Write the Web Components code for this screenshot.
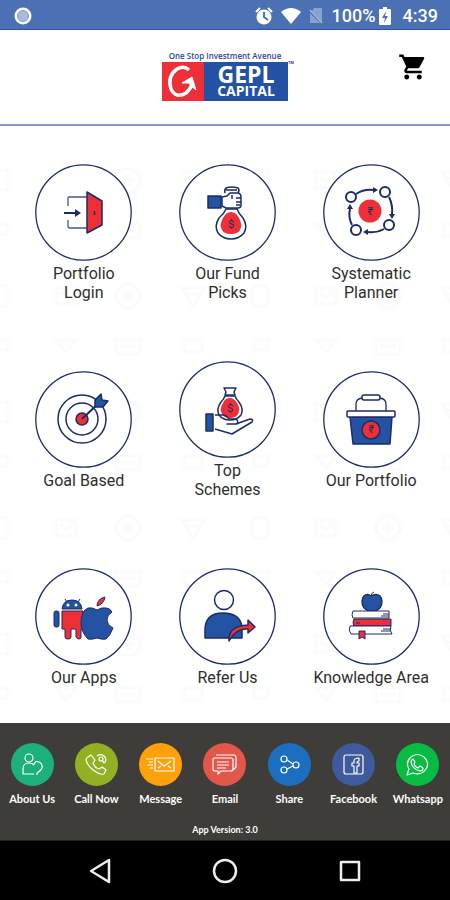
<!DOCTYPE html>
<html lang="en">
<head>
<meta charset="utf-8">
<meta name="viewport" content="width=device-width, initial-scale=1">
<title>GEPL Capital</title>
<style>
  body {
    margin: 0;
    background: #fff;
    font-family: Roboto, "Liberation Sans", sans-serif;
  }
</style>
</head>
<body>
<app-screen>
  <status-bar slot="status" battery="100%" time="4:39"></status-bar>
  <app-header slot="header"></app-header>

  <menu-tile icon="login">Portfolio<br>Login</menu-tile>
  <menu-tile icon="fund">Our Fund<br>Picks</menu-tile>
  <menu-tile icon="planner">Systematic<br>Planner</menu-tile>
  <menu-tile icon="goal">Goal Based</menu-tile>
  <menu-tile icon="schemes">Top<br>Schemes</menu-tile>
  <menu-tile icon="basket">Our Portfolio</menu-tile>
  <menu-tile icon="apps">Our Apps</menu-tile>
  <menu-tile icon="refer">Refer Us</menu-tile>
  <menu-tile icon="books">Knowledge Area</menu-tile>

  <contact-bar slot="footer">
    <contact-link icon="about" color="#1bb07c">About Us</contact-link>
    <contact-link icon="call" color="#93b023">Call Now</contact-link>
    <contact-link icon="message" color="#ffa10a">Message</contact-link>
    <contact-link icon="email" color="#e2574a">Email</contact-link>
    <contact-link icon="share" color="#1c6fc0">Share</contact-link>
    <contact-link icon="facebook" color="#3d5a9c">Facebook</contact-link>
    <contact-link icon="whatsapp" color="#07bb43">Whatsapp</contact-link>
    <span slot="version">App Version: 3.0</span>
  </contact-bar>
  <nav-bar slot="nav"></nav-bar>
</app-screen>

<script>
// menu icons, drawn on a 97 x 97 canvas
const TILE_ICONS = {
  login: `
    <path d="M33 42v-8q0-1 1-1h18M33 56v6q0 2 2 2h17" stroke-width="1.3" stroke="#4a5685"/>
    <path d="M29 49h13" stroke-width="2"/><path class="navy" d="M40 45l6 4-6 4z"/>
    <path class="red" d="M52 28l15 9v24l-15 8z"/>
    <path d="M59.5 47v4"/>`,
  fund: `
    <path d="M46 29q-1-3 1-5 5-2 12 0 2 2 0 5M47 26h11"/>
    <path class="blue" d="M29 32h13v12H29z"/>
    <path class="white" d="M43 33l5-1 3-3h7q4 0 4 4v8q0 3-3 3H47l-4-2zM57 34h5M57 38h5M57 41h4M53 31v4"/>
    <path class="white" d="M47 45h11q2 5 6 9 5 8 1 15-5 6-13 6t-13-6q-4-7 1-15 5-4 7-9z"/>
    <path class="fill-red" d="M52 48q5 0 8 6 4 7 1 12-2 4-9 4t-9-4q-3-5 1-12 3-6 8-6z"/>
    <text x="52" y="64">$</text>`,
  planner: `
    <circle cx="28" cy="33" r="5" stroke-width="2"/><circle cx="62" cy="28" r="5" stroke-width="2"/>
    <circle cx="66" cy="61" r="5" stroke-width="2"/><circle cx="33" cy="66" r="5" stroke-width="2"/>
    <path d="M33 30q8-5 17-4M66 33q4 8 3 17M61 65q-7 4-16 3M29 61q-4-8-2-16" stroke-width="2"/>
    <path class="navy" d="M50 23l5 3-5 3zM66 50l3 5 3-5zM45 65l-5 3 5 3zM24 45l3-5 3 5z"/>
    <circle class="fill-red" cx="47" cy="47" r="11.5"/>
    <text x="47" y="51">₹</text>`,
  goal: `
    <circle cx="47" cy="48" r="24"/><circle cx="47" cy="48" r="16"/>
    <circle class="red" cx="47" cy="48" r="6"/>
    <path d="M47 48l19-18" stroke-width="2"/>
    <path class="blue" d="M60 36v-7l6-6 1 6 6 1-5 6z"/>`,
  schemes: `
    <path d="M45 27h12l-2 4 1 3H46l1-3z"/>
    <path class="white" d="M46 35h10q1 3 4 6 5 7 2 13-4 5-11 5t-11-5q-3-6 2-13 3-3 4-6z"/>
    <path class="fill-red" d="M51 37q4 0 7 5 4 6 1 11-2 4-8 4t-8-4q-3-5 1-11 2-5 7-5z"/>
    <text x="51" y="51">$</text>
    <path class="blue" d="M27 53h7v17h-7z"/>
    <path d="M36 54h8q3 0 6 4h6q4 1 2 5H48h9l14-5q4 0 2 3L53 73l-17-5"/>`,
  basket: `
    <path d="M33 40v-7q0-5 6-6M63 40v-7q0-5-6-6" stroke-width="1.3"/>
    <rect x="39" y="24" width="18" height="5" rx="2"/>
    <path class="blue" d="M27 46h42l-2 27H30z"/>
    <rect class="white" x="24" y="40" width="48" height="6" rx="1"/>
    <circle class="red" cx="48" cy="59" r="9"/>
    <text x="48" y="62">₹</text>`,
  apps: `
    <path d="M30 31l2 3M45 31l-2 3" stroke-width="1"/>
    <path class="blue" d="M27 41q1-9 10-9t10 9z" stroke-width="1"/>
    <circle class="dot" cx="33" cy="37" r="1.5"/><circle class="dot" cx="41" cy="37" r="1.5"/>
    <rect class="blue" x="19" y="43" width="5" height="16" rx="2" stroke-width="1"/>
    <path class="red" stroke-width="1" d="M27 43h21v18h-2v8q0 2-2 2t-3-2v-8h-5v8q0 2-3 2t-3-2v-8h-3z"/>
    <path class="blue" stroke-width="1" d="M62 42q5-3 9-2 4 0 6 4-5 3-5 8t6 8q-3 8-7 11-3 1-9-1-6 2-9 1-7-7-7-16 0-12 7-15 4-1 9 2z"/>
    <path class="red" stroke-width="1" d="M62 38q0-7 8-9-1 7-8 9z"/>`,
  refer: `
    <circle cx="45" cy="32" r="9.5"/>
    <path class="blue" d="M26 70v-8q0-17 18-17t19 15v10z"/>
    <path class="red" d="M50 73q-1-15 19-16v-5l7 7-7 6v-4q-12-1-19 12z"/>`,
  books: `
    <path class="blue" d="M48 28q5-3 9 0 4 5 0 12l-4 3h-8l-4-3q-4-7 0-12 3-3 7 0z"/>
    <path d="M48 28q0-3 3-4" stroke-width="1"/>
    <g stroke-width="1"><path class="white" d="M30 43h36v7H30q-2-3 0-7zM60 46h6M58 48h8"/>
    <path class="red" d="M31 51h37v7H31q-2-3 0-7zM33 55h4"/>
    <path class="white" d="M27 58h41q-2 4 1 8H28q-3-4-1-8zM60 61h8M58 63h9"/>
    <path class="red" d="M36 63h6v8l-3-2-3 2z"/></g>`
};

// contact icons, drawn on a 43 x 43 canvas
const CONTACT_ICONS = {
  about: `<circle cx="18" cy="15" r="4"/>
    <path d="M23 31H12v-5q0-6 6-6 3 0 5 2M23 22q1-5 5-3 4 2 3 6-1 3-5 5v2"/>`,
  call: `<path d="M13 14l3-2 4 5-2 3q2 5 6 6l3-2 4 3-2 4q-4 1-8-2-8-5-10-12 0-2 2-3z"/>
    <circle cx="26" cy="16" r="2"/><path d="M22 13q4-3 8 1 2 4-1 6l-2-3"/>`,
  message: `<rect x="16" y="15" width="19" height="13"/>
    <path d="M19 18l6 5 7-5M19 25l3-2M32 25l-3-2M7 16h7M10 19h4M8 22h6M11 25h3"/>`,
  email: `<path d="M11 15h17q2 0 2 2v9q0 2-2 2H18l-3 3v-3h-3q-2 0-2-2v-9q0-2 2-2zM13 12h18q2 0 2 3v9l-3 3M14 19h12M14 22h12M14 25h9"/>`,
  share: `<circle cx="16" cy="16" r="3"/><circle cx="28" cy="22" r="3"/><circle cx="16" cy="27" r="3"/>
    <path d="M19 17l6 4M19 26l6-3"/>`,
  facebook: `<rect x="12" y="12" width="19" height="19" rx="2"/>
    <path d="M22 30v-7h-2v-3h2v-2q0-3 5-3v3q-2 0-2 2h2v3h-2v7z"/>`,
  whatsapp: `<path d="M11 32l2-6q-4-7 2-12 6-5 13 0 6 6 2 12-5 7-13 4z"/>
    <path d="M17 16l2 3-1 2q1 3 4 4l2-2 3 2q0 3-3 3-8-2-9-9 0-2 2-3z"/>`
};

class AppScreen extends HTMLElement {
  constructor() {
    super();
    this.attachShadow({ mode: 'open' }).innerHTML = `
      <style>
        :host {
          display: flex;
          flex-direction: column;
          min-height: 100vh;
        }
        main {
          position: relative;
          flex: 1;
          display: grid;
          overflow: hidden;
        }
        .backdrop {
          position: absolute;
          width: 100%;
          height: 100%;
          fill: none;
          stroke: #fbfbfb;
          stroke-width: 3;
        }
        .grid {
          position: relative;
          display: grid;
          grid-template-columns: repeat(3, 1fr);
          grid-auto-rows: 1fr;
          align-items: center;
          row-gap: 59px;
          padding: 38px 7px 27px 12px;
        }
      </style>
      <slot name="status"></slot>
      <slot name="header"></slot>
      <main>
        <svg class="backdrop" aria-hidden="true">
          <defs>
            <pattern id="doodles" width="260" height="116" patternUnits="userSpaceOnUse">
              <path d="M-8 44h16v20H-8zM252 44h16v20h-16zM56 46h20v16H56zM60 50l6 6 8-8"/>
              <circle cx="128" cy="54" r="12"/><path d="M122 54h12M128 48v12"/>
              <path d="M182 46h22l-11 19zM186 52h14"/>
              <path d="M-6 98h14v10H-6zM254 98h14v10h-14zM56 98l10 12 10-12zM116 98h24v14h-24zM120 104h16M184 98h18v12h-18z"/>
            </pattern>
          </defs>
          <rect width="100%" height="100%" fill="url(#doodles)" stroke="none"/>
        </svg>
        <div class="grid"><slot></slot></div>
      </main>
      <slot name="footer"></slot>
      <slot name="nav"></slot>
    `;
  }
}

class StatusBar extends HTMLElement {
  constructor() {
    super();
    this.attachShadow({ mode: 'open' }).innerHTML = `
      <style>
        :host {
          display: flex;
          align-items: center;
          box-sizing: border-box;
          height: 30px;
          padding: 2px 12px 0 14px;
          border-bottom: 1px solid #2c53a3;
          background: #4b70b4;
          color: #fff;
          font-size: 18px;
          font-weight: 500;
          line-height: 20px;
        }
        svg { display: block; fill: #fff; }
        .dot { margin-right: auto; }
        .icons { display: flex; align-items: center; gap: 8px; margin-right: 9px; }
        .battery { margin: 0 12px 0 3px; }
      </style>
      <svg class="dot" width="18" height="18" viewBox="0 0 18 18"><circle cx="9" cy="9" r="8.5"/><circle cx="9" cy="9" r="5.5" fill="#a9bbdc" stroke="#7f99ca"/></svg>
      <div class="icons">
        <svg width="18" height="18" viewBox="0 0 18 18"><circle cx="9" cy="10" r="7.5"/><path d="M1 5l4-4M17 5l-4-4" stroke="#fff" stroke-width="2"/><path d="M9 5v5l4 3" fill="none" stroke="#4b70b4" stroke-width="2"/></svg>
        <svg width="20" height="18" viewBox="0 0 20 18"><path d="M0 5q10-8 20 0L10 17z"/></svg>
        <svg width="14" height="18" viewBox="0 0 14 18"><path d="M5 1h8v14L3 4z" opacity=".35"/><path d="M1 6l10 10H1z" opacity=".35"/><path d="M1 3l12 13" stroke="#a9bbdc" stroke-width="1.5"/></svg>
      </div>
      <span id="level"></span>
      <svg class="battery" width="12" height="18" viewBox="0 0 12 18"><path d="M4 0h4v2h3q1 0 1 1v14q0 1-1 1H1q-1 0-1-1V3q0-1 1-1h3z"/><path d="M7 4l-4 7h3l-1 5 4-7H6z" fill="#4b70b4"/></svg>
      <span id="time"></span>
    `;
  }

  connectedCallback() {
    this.shadowRoot.getElementById('level').textContent = this.getAttribute('battery');
    this.shadowRoot.getElementById('time').textContent = this.getAttribute('time');
  }
}

class AppHeader extends HTMLElement {
  constructor() {
    super();
    this.attachShadow({ mode: 'open' }).innerHTML = `
      <style>
        :host { display: block; border-bottom: 2px solid #8598c8; }
        header {
          display: grid;
          grid-template-columns: 1fr auto 1fr;
          align-items: start;
          padding: 20px 22px 23px;
        }
        .logo {
          grid-column: 2;
          width: 126px;
          font-family: "Open Sans", "Noto Sans", sans-serif;
          font-weight: 700;
          text-align: center;
        }
        .tagline {
          color: #33458f;
          font-size: 8px;
          font-weight: 600;
          line-height: 12px;
          white-space: nowrap;
        }
        .brand { position: relative; display: flex; height: 39px; color: #fff; }
        .mark { width: 42px; background: #ed2f38; }
        .name { flex: 1; background: #2352a5; }
        .gepl { font-size: 23px; line-height: 24px; }
        .capital { font-size: 14px; line-height: 10px; }
        .tm { position: absolute; left: 100%; top: -2px; color: #33458f; font-size: 4px; line-height: 6px; }
        button {
          justify-self: end;
          padding: 0;
          border: 0;
          background: none;
        }
        svg { display: block; }
      </style>
      <header>
        <div class="logo">
          <div class="tagline">One Stop Investment Avenue</div>
          <div class="brand">
            <svg class="mark" width="42" height="39" viewBox="0 0 42 39">
              <path d="M27 8Q22 3 15 7 5 14 9 27q5 10 15 4 4-3 6-9" fill="none" stroke="#fff" stroke-width="3.5"/>
              <path d="M20 21l10-6 4 13-5-4-2-3z" fill="#fff" stroke="#fff"/>
            </svg>
            <div class="name"><div class="gepl">GEPL</div><div class="capital">CAPITAL</div></div>
            <span class="tm">TM</span>
          </div>
        </div>
        <button aria-label="Cart">
          <svg width="30" height="34" viewBox="0 0 24 24"><path d="M7 18c-1.1 0-1.99.9-1.99 2S5.9 22 7 22s2-.9 2-2-.9-2-2-2zM1 2v2h2l3.6 7.59-1.35 2.45c-.16.28-.25.61-.25.96 0 1.1.9 2 2 2h12v-2H7.42c-.14 0-.25-.11-.25-.25l.03-.12.9-1.63h7.45c.75 0 1.41-.41 1.75-1.03l3.58-6.49A1 1 0 0 0 20 4H5.21l-.94-2H1zm16 16c-1.1 0-1.99.9-1.99 2s.89 2 1.99 2 2-.9 2-2-.9-2-2-2z"/></svg>
        </button>
      </header>
    `;
  }
}

class MenuTile extends HTMLElement {
  constructor() {
    super();
    this.attachShadow({ mode: 'open' }).innerHTML = `
      <style>
        :host { display: block; }
        a {
          display: flex;
          flex-direction: column;
          align-items: center;
          gap: 3px;
          color: #2e2e2e;
          font-size: 16px;
          line-height: 19px;
          text-align: center;
          text-decoration: none;
          white-space: nowrap;
        }
        svg {
          display: block;
          width: 97px;
          height: 97px;
          fill: none;
          stroke: #1c2c66;
          stroke-width: 1.5;
          stroke-linejoin: round;
        }
        .ring { fill: #fff; stroke-width: 1.3; }
        .red { fill: #ee2f36; }
        .fill-red { fill: #ee2f36; stroke: none; }
        .blue { fill: #2553a4; }
        .navy { fill: #1c2c66; stroke: none; }
        .white { fill: #fff; }
        .dot { fill: #fff; stroke: none; }
        text {
          fill: #1c2c66;
          stroke: none;
          font-size: 11px;
          text-anchor: middle;
        }
      </style>
      <a href="#">
        <svg viewBox="0 0 97 97" aria-hidden="true"><circle class="ring" cx="48.5" cy="48.5" r="47.7"/><g id="art"></g></svg>
        <span><slot></slot></span>
      </a>
    `;
  }

  connectedCallback() {
    this.shadowRoot.getElementById('art').innerHTML = TILE_ICONS[this.getAttribute('icon')] || '';
  }
}

class ContactBar extends HTMLElement {
  constructor() {
    super();
    this.attachShadow({ mode: 'open' }).innerHTML = `
      <style>
        :host { display: block; background: #3e3d39; color: #fff; font-family: Lato, sans-serif; font-weight: 700; }
        footer { padding: 20px 0 4px; }
        .links { display: grid; grid-auto-flow: column; grid-auto-columns: 1fr; }
        .version {
          margin-top: 18px;
          font-size: 9px;
          line-height: 12px;
          text-align: center;
        }
      </style>
      <footer>
        <div class="links"><slot></slot></div>
        <div class="version"><slot name="version"></slot></div>
      </footer>
    `;
  }
}

class ContactLink extends HTMLElement {
  constructor() {
    super();
    this.attachShadow({ mode: 'open' }).innerHTML = `
      <style>
        :host { display: block; }
        a {
          display: flex;
          flex-direction: column;
          align-items: center;
          gap: 5px;
          color: inherit;
          font-size: 11px;
          line-height: 15px;
          text-decoration: none;
          white-space: nowrap;
        }
        svg {
          display: block;
          width: 43px;
          height: 43px;
          border-radius: 50%;
          background: var(--badge);
          fill: none;
          stroke: #fff;
          stroke-width: 1.2;
          stroke-linejoin: round;
        }
      </style>
      <a href="#"><svg viewBox="0 0 43 43" aria-hidden="true"></svg><span><slot></slot></span></a>
    `;
  }

  connectedCallback() {
    this.style.setProperty('--badge', this.getAttribute('color'));
    this.shadowRoot.querySelector('svg').innerHTML = CONTACT_ICONS[this.getAttribute('icon')] || '';
  }
}

class NavBar extends HTMLElement {
  constructor() {
    super();
    this.attachShadow({ mode: 'open' }).innerHTML = `
      <style>
        :host { display: block; border-top: 1px solid #222; background: #000; }
        nav { display: grid; grid-template-columns: repeat(3, 1fr); height: 59px; padding: 0 38px; }
        button { display: grid; place-items: center; padding: 0; border: 0; background: none; }
        svg { fill: none; stroke: #eee; stroke-width: 2.5; stroke-linejoin: round; }
      </style>
      <nav>
        <button aria-label="Back"><svg width="26" height="26" viewBox="0 0 26 26"><path d="M22 2v22L4 13z"/></svg></button>
        <button aria-label="Home"><svg width="26" height="26" viewBox="0 0 26 26"><circle cx="13" cy="13" r="11"/></svg></button>
        <button aria-label="Recents"><svg width="26" height="26" viewBox="0 0 26 26"><path d="M4 4h18v18H4z"/></svg></button>
      </nav>
    `;
  }
}

customElements.define('app-screen', AppScreen);
customElements.define('status-bar', StatusBar);
customElements.define('app-header', AppHeader);
customElements.define('menu-tile', MenuTile);
customElements.define('contact-bar', ContactBar);
customElements.define('contact-link', ContactLink);
customElements.define('nav-bar', NavBar);
</script>
</body>
</html>
